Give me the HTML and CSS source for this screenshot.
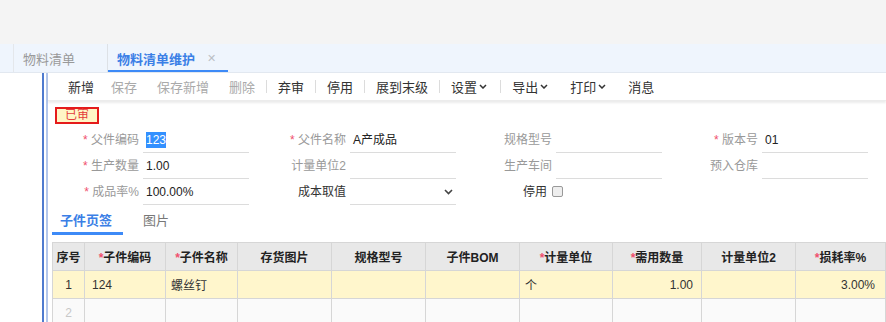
FILE: index.html
```html
<!DOCTYPE html>
<html lang="zh-CN">
<head>
  <meta charset="UTF-8">
  <title>物料清单维护</title>
  <link rel="stylesheet" href="styles.css">
</head>
<body>

  <div class="topband"></div>

  <div class="tabbar">
    <div class="tab">物料清单</div>
    <div class="tab active">物料清单维护<span class="close">✕</span></div>
  </div>

  <div class="main">
    <div class="gutter"></div>
    <div class="frame">
      <div class="page">

        <div class="toolbar">
          <span class="tb-btn">新增</span>
          <span class="tb-btn off">保存</span>
          <span class="tb-btn off">保存新增</span>
          <span class="tb-btn off">删除</span>
          <span class="tb-sep"></span>
          <span class="tb-btn">弃审</span>
          <span class="tb-sep"></span>
          <span class="tb-btn">停用</span>
          <span class="tb-sep"></span>
          <span class="tb-btn">展到末级</span>
          <span class="tb-sep"></span>
          <span class="tb-btn drop">设置<svg class="chev" width="8" height="5" viewBox="0 0 8 5"><polyline points="1,1 4,4 7,1" fill="none" stroke="#333" stroke-width="1.5"/></svg></span>
          <span class="tb-sep"></span>
          <span class="tb-btn drop">导出<svg class="chev" width="8" height="5" viewBox="0 0 8 5"><polyline points="1,1 4,4 7,1" fill="none" stroke="#333" stroke-width="1.5"/></svg></span>
          <span class="tb-btn drop">打印<svg class="chev" width="8" height="5" viewBox="0 0 8 5"><polyline points="1,1 4,4 7,1" fill="none" stroke="#333" stroke-width="1.5"/></svg></span>
          <span class="tb-btn">消息</span>
        </div>

        <div class="badge">已审</div>

        <div class="form">
          <div class="field"><label><i>*</i> 父件编码</label><div class="inp"><span class="sel">123</span></div></div>
          <div class="field"><label><i>*</i> 父件名称</label><div class="inp">A产成品</div></div>
          <div class="field"><label>规格型号</label><div class="inp"></div></div>
          <div class="field"><label><i>*</i> 版本号</label><div class="inp">01</div></div>

          <div class="field"><label><i>*</i> 生产数量</label><div class="inp">1.00</div></div>
          <div class="field"><label>计量单位2</label><div class="inp"></div></div>
          <div class="field"><label>生产车间</label><div class="inp"></div></div>
          <div class="field"><label>预入仓库</label><div class="inp"></div></div>

          <div class="field"><label><i>*</i> 成品率%</label><div class="inp">100.00%</div></div>
          <div class="field"><label class="dark">成本取值</label><div class="inp select"><svg width="9" height="6" viewBox="0 0 9 6"><polyline points="1,1 4.5,4.5 8,1" fill="none" stroke="#444" stroke-width="1.6"/></svg></div></div>
          <div class="field chk-field"><label class="dark">停用</label><span class="checkbox"></span></div>
          <div class="field"></div>
        </div>

        <div class="subtabs">
          <div class="subtab active">子件页签</div>
          <div class="subtab">图片</div>
        </div>

        <table class="grid">
          <colgroup>
            <col style="width:32px"><col style="width:81px"><col style="width:72px"><col style="width:94px"><col style="width:94px">
            <col style="width:94px"><col style="width:93px"><col style="width:89px"><col style="width:94px"><col style="width:90px">
          </colgroup>
          <thead>
            <tr>
              <th>序号</th>
              <th><i>*</i>子件编码</th>
              <th><i>*</i>子件名称</th>
              <th>存货图片</th>
              <th>规格型号</th>
              <th>子件BOM</th>
              <th><i>*</i>计量单位</th>
              <th><i>*</i>需用数量</th>
              <th>计量单位2</th>
              <th><i>*</i>损耗率%</th>
            </tr>
          </thead>
          <tbody>
            <tr class="current">
              <td class="num">1</td>
              <td class="pad8">124</td>
              <td>螺丝钉</td>
              <td></td>
              <td></td>
              <td></td>
              <td>个</td>
              <td class="right">1.00</td>
              <td></td>
              <td class="right">3.00%</td>
            </tr>
            <tr class="empty">
              <td class="num">2</td>
              <td></td><td></td><td></td><td></td><td></td><td></td><td></td><td></td><td></td>
            </tr>
          </tbody>
        </table>

      </div>
    </div>
  </div>

</body>
</html>
```

FILE: styles.css
```css
* {
  margin: 0;
  padding: 0;
  box-sizing: border-box;
}

body {
  font-family: 'Liberation Sans', 'Noto Sans CJK SC', sans-serif;
  font-size: 12px;
  color: #333;
  background: #fff;
  height: 322px;
  overflow: hidden;
}

i {
  font-style: normal;
  color: #f0506e;
}

.topband {
  height: 44px;
  background: #f4f4f4;
}

.tabbar {
  height: 29px;
  display: flex;
  padding-left: 13px;
  background: #eff5fd;
  border-bottom: 1px solid #e2e8f0;
}

.tab {
  display: flex;
  align-items: center;
  height: 100%;
  font-size: 13px;
  color: #999;
  border-left: 1px solid #e4e7eb;
  padding-left: 9px;
  width: 94px;
}

.tab.active {
  width: 121px;
  color: #3b7fe6;
  font-weight: bold;
  border-left: 1px solid #dde1e6;
  box-shadow: inset 0 -2px 0 #3d8af7;
}

.tab .close {
  font-weight: normal;
  color: #bbbfc5;
  font-size: 11px;
  margin-left: 12px;
}

.main {
  display: flex;
  height: 249px;
}

.gutter {
  width: 42px;
}

.frame {
  flex: 1;
  border-left: 2px solid #4f7bcf;
  padding-left: 2px;
}

.page {
  height: 100%;
  border-left: 2px solid #b3c7ec;
}

.toolbar {
  height: 28px;
  display: flex;
  align-items: center;
  padding-left: 10px;
  font-size: 13px;
  box-shadow: 0 2px 2px rgba(0, 0, 0, 0.08);
  border-bottom: 1px solid #ececec;
}

.tb-btn {
  display: flex;
  align-items: center;
  padding: 0 10px;
  color: #333;
}

.tb-btn:first-child {
  padding-right: 7px;
}

.tb-btn.off {
  color: #aaa;
}

.tb-btn.drop {
  padding-right: 12px;
}

.chev {
  margin-left: 2px;
}

.tb-sep {
  width: 1px;
  height: 13px;
  background: #dcdcdc;
  margin: 0 1px;
}

.badge {
  width: 44px;
  height: 17px;
  margin: 6px 0 0 7px;
  border: 2px solid #e51b1b;
  background: #fff6c6;
  color: #e43c3c;
  font-size: 12px;
  line-height: 13px;
  padding-left: 8px;
}

.form {
  display: grid;
  grid-template-columns: 201px 207px 206px 206px;
  grid-auto-rows: 26px;
  margin-top: 4px;
}

.field {
  display: flex;
  align-items: flex-start;
}

.field label {
  flex: 1;
  text-align: right;
  color: #999;
  line-height: 24px;
  padding-right: 4px;
  white-space: nowrap;
}

.field label.dark {
  color: #333;
}

.inp {
  width: 106px;
  height: 25px;
  border-bottom: 1px solid #dcdcdc;
  line-height: 24px;
  padding-left: 3px;
  color: #222;
}

.sel {
  background: #3390ff;
  color: #fff;
  padding: 1px 0;
}

.inp.select {
  display: flex;
  align-items: center;
  justify-content: flex-end;
  padding-right: 3px;
}

.chk-field label {
  flex: 0 0 96px;
  padding-right: 5px;
}

.checkbox {
  width: 11px;
  height: 11px;
  margin-top: 6px;
  border: 1px solid #999;
  border-radius: 2px;
  background: #eee;
}

.subtabs {
  display: flex;
  margin: 2px 0 0 4px;
  height: 27px;
}

.subtab {
  font-size: 13px;
  color: #777;
  padding: 0 10px 0 8px;
  line-height: 25px;
}

.subtab.active {
  color: #3b7fe6;
  font-weight: bold;
  border-bottom: 3px solid #3d8af7;
  padding-right: 11px;
}

.subtab + .subtab {
  margin-left: 12px;
}

.grid {
  margin: 7px 0 0 4px;
  border-collapse: collapse;
  table-layout: fixed;
  width: 834px;
}

.grid th,
.grid td {
  border: 1px solid #d6d6d6;
  height: 28px;
  white-space: nowrap;
  overflow: hidden;
}

.grid th {
  background: #e8e8e8;
  font-weight: bold;
  color: #222;
  font-size: 12px;
  text-align: center;
}

.grid td {
  padding: 0 5px;
  color: #333;
}

.grid td.pad8 {
  padding-left: 7px;
}

.grid td.num {
  text-align: center;
}

.grid td.right {
  text-align: right;
  padding-right: 8px;
}

.grid td:last-child.right {
  padding-right: 10px;
}

.grid tr.current td {
  background: #fff6cc;
}

.grid tr.empty td {
  background: #fafafa;
}

.grid tr.empty td.num {
  color: #c8c8c8;
}
```
